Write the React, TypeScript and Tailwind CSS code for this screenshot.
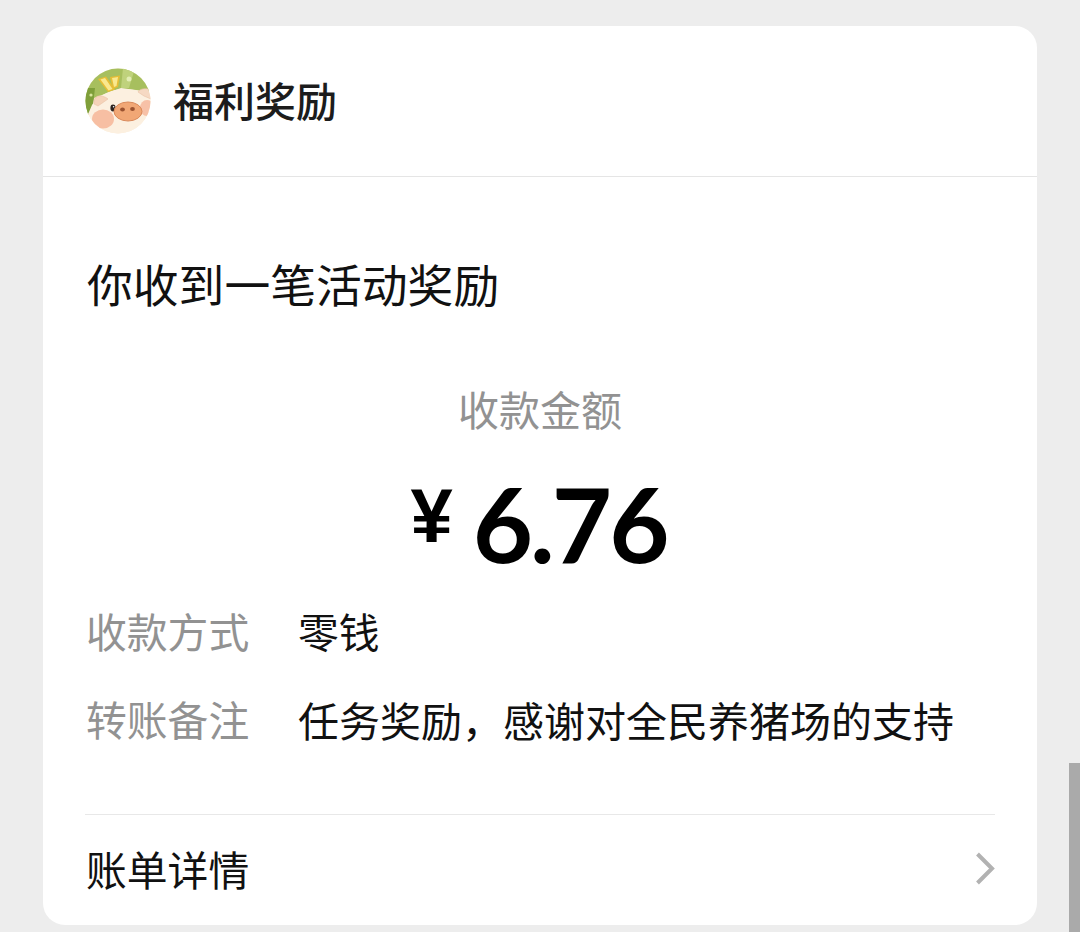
const cjk = 'font-["Noto_Sans_CJK_SC","Noto_Sans",sans-serif]';

function PigAvatar() {
  return (
    <svg width="66" height="66" viewBox="0 0 66 66" className="mt-[2px] shrink-0">
      <defs>
        <clipPath id="avatar-clip">
          <circle cx="33" cy="33" r="32.5" />
        </clipPath>
      </defs>
      <g clipPath="url(#avatar-clip)">
        <rect width="66" height="66" fill="#fcf0e0" />
        <path d="M0 0H66V24L36 20L9 30L4 46L0 50Z" fill="#a7bf5e" />
        <path d="M0 20H10L7 46H0Z" fill="#7f9f3a" />
        <path d="M38 0H50L44 20H36Z" fill="#bfd27c" />
        <circle cx="44" cy="11" r="2.5" fill="#e2edb4" />
        <circle cx="6" cy="27" r="1.6" fill="#d9e69f" />
        <path d="M7 37C12 28 26 21 38 21C48 21 58 23 66 29V66H0V52C3 46 5 42 7 37Z" fill="#fcf0e0" />
        <path d="M13 11L21 8.5L30 21.5L23 24Z" fill="#e6bd35" />
        <path d="M15.5 11.5L20 10L27.5 21L23.5 22.5Z" fill="#f9e88e" />
        <path d="M25 9L35 7.5L33 19L28 21Z" fill="#e6bd35" />
        <path d="M27 10L33 9L31.5 18L29 19Z" fill="#f9e88e" />
        <path d="M9 36C8 30 12 27 17 28C20 29 22 30 23 31L13 38Z" fill="#f5d3ba" stroke="#e9c3a6" strokeWidth="0.6" />
        <path d="M53 24C55 20 62 20 66 22V31L59 28Z" fill="#f6d9c3" stroke="#e9c3a6" strokeWidth="0.6" />
        <ellipse cx="18" cy="51" rx="11" ry="9.5" fill="#f6b99c" opacity="0.9" />
        <ellipse cx="62" cy="40" rx="7" ry="8" fill="#f6b99c" opacity="0.85" />
        <ellipse cx="28" cy="40" rx="2.6" ry="3.4" fill="#2e2420" />
        <circle cx="28.6" cy="38.8" r="0.8" fill="#fff" />
        <ellipse cx="43" cy="43.5" rx="14" ry="9.5" fill="#f1a775" stroke="#d98a5c" strokeWidth="1" />
        <ellipse cx="37.5" cy="41.5" rx="2.4" ry="2" fill="#9a5230" />
        <ellipse cx="47.5" cy="41" rx="2.4" ry="2" fill="#9a5230" />
      </g>
    </svg>
  );
}

export default function App() {
  return (
    <div className={`relative h-[932px] overflow-hidden bg-[#ededed] pt-[26px] pl-[43px] ${cjk}`}>
      <div className="flex h-[899px] w-[994px] flex-col rounded-[22px] bg-white">
        <header className="flex h-[151px] shrink-0 items-center gap-[22px] border-b border-[#e5e5e5] pl-[42px] pb-[2px]">
          <PigAvatar />
          <h1 className="mb-[2px] text-[41px] leading-none font-medium text-[#1c1c1c]">福利奖励</h1>
        </header>

        <main className="flex flex-1 flex-col pr-[42px] pl-[43px]">
          <p className="mt-[80px] ml-[1px] text-[45.8px] leading-[52px] text-[#111]">你收到一笔活动奖励</p>

          <div className="mt-[75px] flex flex-col items-center pr-[1px]">
            <p className="text-[41px] leading-[48px] text-[#929292]">收款金额</p>
            <div className="mt-[36px] mr-[3px] flex h-[110px] items-center text-black">
              <span className="mr-[20px] mb-[15px] font-['Liberation_Sans',sans-serif] text-[76px] leading-none font-bold">¥</span>
              <span className="font-['Lato',sans-serif] text-[104px] leading-none font-bold tracking-[-3px]">6.76</span>
            </div>
          </div>

          <dl className="mt-[29px] flex flex-col gap-[40px] text-[40.8px] leading-[48px]">
            <div className="flex">
              <dt className="w-[212px] text-[#929292]">收款方式</dt>
              <dd className="text-[#111]">零钱</dd>
            </div>
            <div className="flex">
              <dt className="w-[212px] text-[#929292]">转账备注</dt>
              <dd className="text-[41px] text-[#111]">任务奖励，感谢对全民养猪场的支持</dd>
            </div>
          </dl>

          <div className="mt-[71px] -ml-[1px] flex flex-1 items-center justify-between border-t border-[#e8e8e8] pb-[3px] pl-[1px]">
            <span className="text-[40.8px] leading-[48px] text-[#111]">账单详情</span>
            <svg width="24" height="38" viewBox="0 0 24 38" fill="none">
              <path d="M6.5 4L21 18.5L6.5 33" stroke="#b2b2b2" strokeWidth="4" />
            </svg>
          </div>
        </main>
      </div>
      <div className="absolute top-[763px] right-0 h-[169px] w-[11px] bg-[#aaaaaa]" />
    </div>
  );
}
